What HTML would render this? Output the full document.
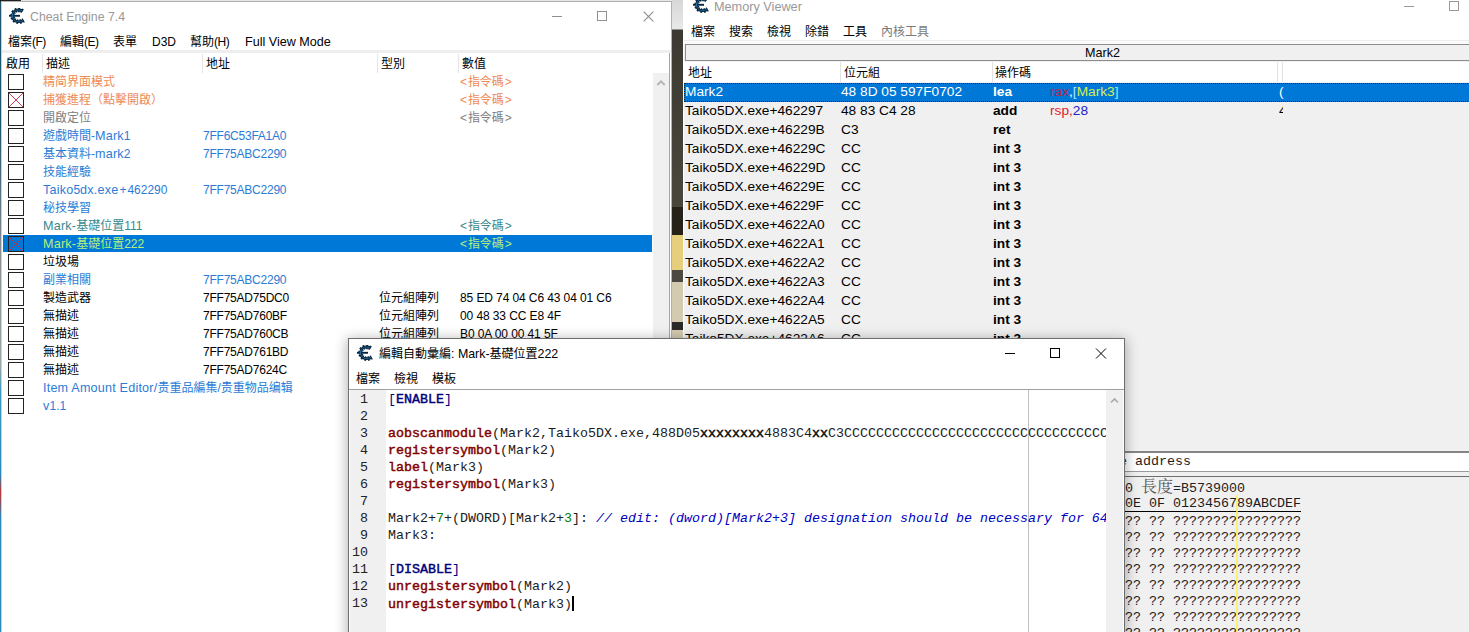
<!DOCTYPE html><html lang="zh-Hant"><head><meta charset="utf-8"><title>Cheat Engine 7.4</title><style>
*{box-sizing:border-box;margin:0;padding:0}
html,body{width:1469px;height:632px;overflow:hidden;background:#f0f0f0}
body{position:relative;font-family:"Liberation Sans","Noto Sans CJK TC",sans-serif;font-size:12px;color:#000;line-height:1}
.a{position:absolute;white-space:pre}
.t{position:absolute;white-space:pre;line-height:16px;height:16px}
#desk{left:0;top:0;width:1469px;height:632px;background:#fff}
/* main CE window */
#ce{left:1px;top:1px;width:671px;height:640px;background:#fff;border:1px solid #b0b0b0;border-left-color:#d0d0d0;overflow:hidden}
#mv{left:683px;top:-12px;width:800px;height:660px;background:#f0f0f0;border-left:1px solid #fff;overflow:hidden}
#ed{left:348px;top:338px;width:777px;height:310px;background:#fff;border:1px solid #6e6e6e;overflow:hidden;box-shadow:0 2px 12px 1px rgba(0,0,0,.3)}
.o{color:#ee8a54} .b{color:#2b7cd6} .g{color:#808080} .k{color:#000}
.cb{position:absolute;left:6px;width:16px;height:16px;border:1px solid #222;background:#fff}
.row{position:absolute;left:0;width:670px;height:18px}
.row .t{top:2px}
.pa{letter-spacing:-0.5px}
.l{font-size:12.6px;letter-spacing:.2px}
.vl{letter-spacing:-0.1px}
.ad{letter-spacing:-0.23px}
.mono{font-family:"Liberation Mono","Noto Sans CJK TC",monospace;font-size:13.33px;color:#1c1c1c}
</style></head><body>
<div class="a" id="desk"></div>
<div class="a" style="left:0;top:0;width:2px;height:632px;background:linear-gradient(#1c5670 0,#1c5670 20%,#8a8f94 40%,#9aa 58%,#3a9ac0 62%,#2a8ab8 75%,#b33 78%,#2a8ab8 82%,#2a8ab8 100%)"></div>
<div class="a" style="left:0;top:0;width:21px;height:2px;background:#222"></div>
<div class="a" style="left:21px;top:0;width:1448px;height:2px;background:#e6e6e6"></div>
<div class="a" style="left:672px;top:0;width:11px;height:632px;background:linear-gradient(#d8d8d8 0,#e8e8e8 29px,#3c3a32 30px,#4a463c 207px,#262219 207px,#262219 235px,#e6cf7c 235px,#e6cf7c 270px,#4a4840 270px,#4a4840 282px,#d3cab0 282px,#d3cab0 322px,#2a2a28 322px,#2a2a28 330px,#d3cab0 330px,#d3cab0 340px,#777 340px)"></div>
<div class="a" id="ce">
<svg class="a" style="left:7px;top:6px" width="16" height="16" viewBox="0 0 16 16"><g fill="none" stroke="#08243a"><path d="M13.6 3.2C12.4 2.4 11 2 9.4 2C5.8 2 3.6 4.4 3.6 7.8C3.6 11.2 5.8 13.6 9.4 13.6C11.4 13.6 13.2 13.1 14.6 12.2" stroke-width="4.6" stroke-dasharray="1.5 1.5"/><path d="M13.6 3.2C12.4 2.4 11 2 9.4 2C5.8 2 3.6 4.4 3.6 7.8C3.6 11.2 5.8 13.6 9.4 13.6C11.4 13.6 13.2 13.1 14.6 12.2" stroke-width="2.8"/><path d="M13.6 3.2C12.4 2.4 11 2 9.4 2C5.8 2 3.6 4.4 3.6 7.8C3.6 11.2 5.8 13.6 9.4 13.6C11.4 13.6 13.2 13.1 14.6 12.2" stroke="#1d6ca5" stroke-width="0.8"/><path d="M0 7.8H11" stroke-width="1.9"/><path d="M3.4 5.8V9.8" stroke="#1d6ca5" stroke-width="1.5"/></g></svg>
<div class="t" style="left:28px;top:7px;color:#999;font-size:12.3px">Cheat Engine 7.4</div>
<svg class="a" style="left:539px;top:0" width="130" height="30" viewBox="0 0 130 30"><g stroke="#8f8f8f" stroke-width="1" fill="none"><path d="M11 14.5H21"/><rect x="56.5" y="9.5" width="9" height="9"/><path d="M102.7 9.7L112.3 19.3M112.3 9.7L102.7 19.3" stroke-width="1.15"/></g></svg>
<div class="t" style="left:6px;top:32px">檔案<span class="pa">(F)</span></div>
<div class="t" style="left:58px;top:32px">編輯<span class="pa">(E)</span></div>
<div class="t" style="left:111px;top:32px">表單</div>
<div class="t" style="left:150px;top:32px">D3D</div>
<div class="t" style="left:188px;top:32px">幫助<span class="pa">(H)</span></div>
<div class="t" style="left:243px;top:32px"><span style="font-size:12.6px">Full View Mode</span></div>
<div class="a" style="left:0;top:48px;width:670px;height:3px;background:#eee"></div>
<div class="a" style="left:40px;top:52px;width:1px;height:19px;background:#e5e5e5"></div>
<div class="a" style="left:200px;top:52px;width:1px;height:19px;background:#e5e5e5"></div>
<div class="a" style="left:375px;top:52px;width:1px;height:19px;background:#e5e5e5"></div>
<div class="a" style="left:456px;top:52px;width:1px;height:19px;background:#e5e5e5"></div>
<div class="t" style="left:4px;top:54px">啟用</div>
<div class="t" style="left:44px;top:54px">描述</div>
<div class="t" style="left:204px;top:54px">地址</div>
<div class="t" style="left:379px;top:54px">型別</div>
<div class="t" style="left:460px;top:54px">數值</div>
<div class="row o" style="top:70px;">
<div class="cb" style="top:2px;"></div>
<div class="t" style="left:41px">精简界面模式</div>
<div class="t vl" style="left:458px">&lt;<span style="margin:0 1px">指令碼</span>&gt;</div>
</div>
<div class="row o" style="top:88px;">
<div class="cb" style="top:2px;"><svg class="a" style="left:0;top:0" width="14" height="14" viewBox="0 0 14 14"><path d="M0 0L14 14M14 0L0 14" stroke="#cc2a3a" stroke-width="0.9" fill="none"/></svg></div>
<div class="t" style="left:41px">捕獲進程（點擊開啟）</div>
<div class="t vl" style="left:458px">&lt;<span style="margin:0 1px">指令碼</span>&gt;</div>
</div>
<div class="row g" style="top:106px;">
<div class="cb" style="top:2px;"></div>
<div class="t" style="left:41px">開啟定位</div>
<div class="t vl" style="left:458px">&lt;<span style="margin:0 1px">指令碼</span>&gt;</div>
</div>
<div class="row b" style="top:124px;">
<div class="cb" style="top:2px;"></div>
<div class="t" style="left:41px">遊戲時間-<span class="l">Mark</span>1</div>
<div class="t ad" style="left:201px">7FF6C53FA1A0</div>
</div>
<div class="row b" style="top:142px;">
<div class="cb" style="top:2px;"></div>
<div class="t" style="left:41px">基本資料-<span class="l">mark</span>2</div>
<div class="t ad" style="left:201px">7FF75ABC2290</div>
</div>
<div class="row b" style="top:160px;">
<div class="cb" style="top:2px;"></div>
<div class="t" style="left:41px">技能經驗</div>
</div>
<div class="row b" style="top:178px;">
<div class="cb" style="top:2px;"></div>
<div class="t" style="left:41px"><span class="l">Taiko</span>5<span class="l">dx.exe</span><span style="margin:0 1px">+</span>462290</div>
<div class="t ad" style="left:201px">7FF75ABC2290</div>
</div>
<div class="row b" style="top:196px;">
<div class="cb" style="top:2px;"></div>
<div class="t" style="left:41px">秘技學習</div>
</div>
<div class="row" style="top:214px;color:#38898c">
<div class="cb" style="top:2px;"></div>
<div class="t" style="left:41px"><span class="l">Mark-</span>基礎位置111</div>
<div class="t vl" style="left:458px">&lt;<span style="margin:0 1px">指令碼</span>&gt;</div>
</div>
<div class="a" style="left:1px;top:233px;width:649px;height:17px;background:#0078d7"></div>
<div class="row" style="top:232px;color:#b6f27a">
<div class="cb" style="top:2px;background:#0078d7;"><svg class="a" style="left:0;top:0" width="14" height="14" viewBox="0 0 14 14"><path d="M0 0L14 14M14 0L0 14" stroke="#cc2a3a" stroke-width="0.9" fill="none"/></svg></div>
<div class="t" style="left:41px"><span class="l">Mark-</span>基礎位置222</div>
<div class="t vl" style="left:458px">&lt;<span style="margin:0 1px">指令碼</span>&gt;</div>
</div>
<div class="row k" style="top:250px;">
<div class="cb" style="top:2px;"></div>
<div class="t" style="left:41px">垃圾場</div>
</div>
<div class="row b" style="top:268px;">
<div class="cb" style="top:2px;"></div>
<div class="t" style="left:41px">副業相關</div>
<div class="t ad" style="left:201px">7FF75ABC2290</div>
</div>
<div class="row k" style="top:286px;">
<div class="cb" style="top:2px;"></div>
<div class="t" style="left:41px">製造武器</div>
<div class="t ad" style="left:201px">7FF75AD75DC0</div>
<div class="t" style="left:377px">位元組陣列</div>
<div class="t vl" style="left:458px">85 ED 74 04 C6 43 04 01 C6</div>
</div>
<div class="row k" style="top:304px;">
<div class="cb" style="top:2px;"></div>
<div class="t" style="left:41px">無描述</div>
<div class="t ad" style="left:201px">7FF75AD760BF</div>
<div class="t" style="left:377px">位元組陣列</div>
<div class="t vl" style="left:458px">00 48 33 CC E8 4F</div>
</div>
<div class="row k" style="top:322px;">
<div class="cb" style="top:2px;"></div>
<div class="t" style="left:41px">無描述</div>
<div class="t ad" style="left:201px">7FF75AD760CB</div>
<div class="t" style="left:377px">位元組陣列</div>
<div class="t vl" style="left:458px">B0 0A 00 00 41 5F</div>
</div>
<div class="row k" style="top:340px;">
<div class="cb" style="top:2px;"></div>
<div class="t" style="left:41px">無描述</div>
<div class="t ad" style="left:201px">7FF75AD761BD</div>
</div>
<div class="row k" style="top:358px;">
<div class="cb" style="top:2px;"></div>
<div class="t" style="left:41px">無描述</div>
<div class="t ad" style="left:201px">7FF75AD7624C</div>
</div>
<div class="row b" style="top:376px;">
<div class="cb" style="top:2px;"></div>
<div class="t" style="left:41px"><span class="l">Item Amount Editor/</span>贵重品編集/贵重物品编辑</div>
</div>
<div class="row b" style="top:394px;">
<div class="cb" style="top:2px;"></div>
<div class="t" style="left:41px"><span class="l">v</span>1.1</div>
</div>
<div class="a" style="left:651px;top:71px;width:16px;height:570px;background:#f0f0f0"></div>
<div class="a" style="left:667px;top:51px;width:1px;height:590px;background:#a6a6a6"></div>
<svg class="a" style="left:651px;top:71px" width="16" height="17" viewBox="0 0 16 17"><path d="M4.3 12L8 8.3L11.7 12" stroke="#b4b4b4" stroke-width="2" fill="none"/></svg>
</div>
<div class="a" id="mv">
<div class="a" style="left:0;top:0;width:800px;height:56px;background:#fbfbfb"></div>
<div class="a" style="left:0;top:0;width:800px;height:52px;background:#fff"></div>
<svg class="a" style="left:9px;top:9px" width="16" height="16" viewBox="0 0 16 16"><g fill="none" stroke="#08243a"><path d="M13.6 3.2C12.4 2.4 11 2 9.4 2C5.8 2 3.6 4.4 3.6 7.8C3.6 11.2 5.8 13.6 9.4 13.6C11.4 13.6 13.2 13.1 14.6 12.2" stroke-width="4.6" stroke-dasharray="1.5 1.5"/><path d="M13.6 3.2C12.4 2.4 11 2 9.4 2C5.8 2 3.6 4.4 3.6 7.8C3.6 11.2 5.8 13.6 9.4 13.6C11.4 13.6 13.2 13.1 14.6 12.2" stroke-width="2.8"/><path d="M13.6 3.2C12.4 2.4 11 2 9.4 2C5.8 2 3.6 4.4 3.6 7.8C3.6 11.2 5.8 13.6 9.4 13.6C11.4 13.6 13.2 13.1 14.6 12.2" stroke="#1d6ca5" stroke-width="0.8"/><path d="M0 7.8H11" stroke-width="1.9"/><path d="M3.4 5.8V9.8" stroke="#1d6ca5" stroke-width="1.5"/></g></svg>
<div class="t" style="left:30px;top:11px;color:#999;font-size:12.7px">Memory Viewer</div>
<svg class="a" style="left:699px;top:8px" width="90" height="20" viewBox="0 0 90 20"><g stroke="#999" stroke-width="1" fill="none"><path d="M21 10.5H31"/><rect x="66.5" y="5.5" width="9" height="9"/></g></svg>
<div class="t" style="left:7px;top:36px;color:#000">檔案</div>
<div class="t" style="left:45px;top:36px;color:#000">搜索</div>
<div class="t" style="left:83px;top:36px;color:#000">檢視</div>
<div class="t" style="left:121px;top:36px;color:#000">除錯</div>
<div class="t" style="left:159px;top:36px;color:#000">工具</div>
<div class="t" style="left:197px;top:36px;color:#7a7a7a">內核工具</div>
<div class="a" style="left:0;top:52px;width:800px;height:1px;background:#ececec"></div>
<div class="a" style="left:1px;top:56px;width:800px;height:17px;background:#f0f0f0;border-top:1px solid #8c8c8c;border-left:1px solid #8c8c8c;border-bottom:1px solid #8c8c8c"></div>
<div class="t" style="left:401px;top:57px;font-size:12.6px">Mark2</div>
<div class="a" style="left:0;top:74px;width:800px;height:20px;background:#fff"></div>
<div class="a" style="left:156px;top:74px;width:1px;height:20px;background:#e2e2e2"></div>
<div class="a" style="left:308px;top:74px;width:1px;height:20px;background:#e2e2e2"></div>
<div class="a" style="left:593px;top:74px;width:1px;height:20px;background:#e2e2e2"></div>
<div class="a" style="left:598px;top:74px;width:1px;height:20px;background:#e2e2e2"></div>
<div class="t" style="left:4px;top:77px">地址</div>
<div class="t" style="left:160px;top:77px">位元組</div>
<div class="t" style="left:311px;top:77px">操作碼</div>
<div class="a" style="left:0;top:95px;width:800px;height:19px;background:#0078d7;outline:1px dotted #222;outline-offset:-1px"></div>
<div class="t" style="left:1px;top:96px;color:#fff;font-size:13.7px;">Mark2</div>
<div class="t" style="left:157px;top:96px;color:#fff;font-size:13.7px;">48 8D 05 597F0702</div>
<div class="t" style="left:309px;top:96px;color:#fff;font-size:13.7px;font-weight:bold">lea</div>
<div class="t" style="left:366px;top:96px;font-size:13.7px;"><span style="color:#b0284c">rax</span><span style="color:#fff">,</span><span style="color:#9fe8ff">[</span><span style="color:#d6f050">Mark3</span><span style="color:#9fe8ff">]</span></div>
<div class="t" style="left:595px;top:96px;color:#fff;font-size:13.7px;">(</div>
<div class="t" style="left:1px;top:115px;color:#000;font-size:13.7px;">Taiko5DX.exe+462297</div>
<div class="t" style="left:157px;top:115px;color:#000;font-size:13.7px;">48 83 C4 28</div>
<div class="t" style="left:309px;top:115px;color:#000;font-size:13.7px;font-weight:bold">add</div>
<div class="t" style="left:366px;top:115px;font-size:13.7px;"><span style="color:#e0202c">rsp,</span><span style="color:#2222cc">28</span></div>
<div class="t" style="left:595px;top:115px;width:4px;overflow:hidden;font-size:13.7px;">4</div>
<div class="t" style="left:1px;top:134px;color:#000;font-size:13.7px;">Taiko5DX.exe+46229B</div>
<div class="t" style="left:157px;top:134px;color:#000;font-size:13.7px;">C3</div>
<div class="t" style="left:309px;top:134px;color:#000;font-size:13.7px;font-weight:bold">ret</div>
<div class="t" style="left:1px;top:153px;color:#000;font-size:13.7px;">Taiko5DX.exe+46229C</div>
<div class="t" style="left:157px;top:153px;color:#000;font-size:13.7px;">CC</div>
<div class="t" style="left:309px;top:153px;color:#000;font-size:13.7px;font-weight:bold">int 3</div>
<div class="t" style="left:1px;top:172px;color:#000;font-size:13.7px;">Taiko5DX.exe+46229D</div>
<div class="t" style="left:157px;top:172px;color:#000;font-size:13.7px;">CC</div>
<div class="t" style="left:309px;top:172px;color:#000;font-size:13.7px;font-weight:bold">int 3</div>
<div class="t" style="left:1px;top:191px;color:#000;font-size:13.7px;">Taiko5DX.exe+46229E</div>
<div class="t" style="left:157px;top:191px;color:#000;font-size:13.7px;">CC</div>
<div class="t" style="left:309px;top:191px;color:#000;font-size:13.7px;font-weight:bold">int 3</div>
<div class="t" style="left:1px;top:210px;color:#000;font-size:13.7px;">Taiko5DX.exe+46229F</div>
<div class="t" style="left:157px;top:210px;color:#000;font-size:13.7px;">CC</div>
<div class="t" style="left:309px;top:210px;color:#000;font-size:13.7px;font-weight:bold">int 3</div>
<div class="t" style="left:1px;top:229px;color:#000;font-size:13.7px;">Taiko5DX.exe+4622A0</div>
<div class="t" style="left:157px;top:229px;color:#000;font-size:13.7px;">CC</div>
<div class="t" style="left:309px;top:229px;color:#000;font-size:13.7px;font-weight:bold">int 3</div>
<div class="t" style="left:1px;top:248px;color:#000;font-size:13.7px;">Taiko5DX.exe+4622A1</div>
<div class="t" style="left:157px;top:248px;color:#000;font-size:13.7px;">CC</div>
<div class="t" style="left:309px;top:248px;color:#000;font-size:13.7px;font-weight:bold">int 3</div>
<div class="t" style="left:1px;top:267px;color:#000;font-size:13.7px;">Taiko5DX.exe+4622A2</div>
<div class="t" style="left:157px;top:267px;color:#000;font-size:13.7px;">CC</div>
<div class="t" style="left:309px;top:267px;color:#000;font-size:13.7px;font-weight:bold">int 3</div>
<div class="t" style="left:1px;top:286px;color:#000;font-size:13.7px;">Taiko5DX.exe+4622A3</div>
<div class="t" style="left:157px;top:286px;color:#000;font-size:13.7px;">CC</div>
<div class="t" style="left:309px;top:286px;color:#000;font-size:13.7px;font-weight:bold">int 3</div>
<div class="t" style="left:1px;top:305px;color:#000;font-size:13.7px;">Taiko5DX.exe+4622A4</div>
<div class="t" style="left:157px;top:305px;color:#000;font-size:13.7px;">CC</div>
<div class="t" style="left:309px;top:305px;color:#000;font-size:13.7px;font-weight:bold">int 3</div>
<div class="t" style="left:1px;top:324px;color:#000;font-size:13.7px;">Taiko5DX.exe+4622A5</div>
<div class="t" style="left:157px;top:324px;color:#000;font-size:13.7px;">CC</div>
<div class="t" style="left:309px;top:324px;color:#000;font-size:13.7px;font-weight:bold">int 3</div>
<div class="t" style="left:1px;top:343px;color:#000;font-size:13.7px;">Taiko5DX.exe+4622A6</div>
<div class="t" style="left:157px;top:343px;color:#000;font-size:13.7px;">CC</div>
<div class="t" style="left:309px;top:343px;color:#000;font-size:13.7px;font-weight:bold">int 3</div>
<div class="a" style="left:440px;top:463px;width:400px;height:2px;background:#858585"></div>
<div class="a" style="left:440px;top:465px;width:400px;height:18px;background:#fff"></div>
<div class="a" style="left:440px;top:483px;width:400px;height:1px;background:#9a9a9a"></div>
<div class="a" style="left:440px;top:488px;width:400px;height:1px;background:#6e6e6e"></div>
<div class="t mono" style="left:435px;top:466px">e address</div>
<div class="t mono" style="left:441px;top:491px;color:#222">0 <span style="font-family:'Liberation Serif','Noto Serif CJK SC',serif;color:#555;font-size:16px">長度</span>=B5739000</div>
<div class="t mono" style="left:441px;top:508px">0E 0F 0123456789ABCDEF</div>
<div class="a" style="left:441px;top:523px;width:176px;height:1px;background:#000"></div>
<div class="t mono" style="left:441px;top:526px">?? ?? ????????????????</div>
<div class="t mono" style="left:441px;top:542px">?? ?? ????????????????</div>
<div class="t mono" style="left:441px;top:558px">?? ?? ????????????????</div>
<div class="t mono" style="left:441px;top:574px">?? ?? ????????????????</div>
<div class="t mono" style="left:441px;top:590px">?? ?? ????????????????</div>
<div class="t mono" style="left:441px;top:606px">?? ?? ????????????????</div>
<div class="t mono" style="left:441px;top:622px">?? ?? ????????????????</div>
<div class="t mono" style="left:441px;top:638px">?? ?? ????????????????</div>
<div class="a" style="left:552px;top:507px;width:2px;height:140px;background:rgba(250,240,90,.8)"></div>
</div>
<div class="a" id="ed">
<svg class="a" style="left:8px;top:6px" width="16" height="16" viewBox="0 0 16 16"><g fill="none" stroke="#08243a"><path d="M13.6 3.2C12.4 2.4 11 2 9.4 2C5.8 2 3.6 4.4 3.6 7.8C3.6 11.2 5.8 13.6 9.4 13.6C11.4 13.6 13.2 13.1 14.6 12.2" stroke-width="4.6" stroke-dasharray="1.5 1.5"/><path d="M13.6 3.2C12.4 2.4 11 2 9.4 2C5.8 2 3.6 4.4 3.6 7.8C3.6 11.2 5.8 13.6 9.4 13.6C11.4 13.6 13.2 13.1 14.6 12.2" stroke-width="2.8"/><path d="M13.6 3.2C12.4 2.4 11 2 9.4 2C5.8 2 3.6 4.4 3.6 7.8C3.6 11.2 5.8 13.6 9.4 13.6C11.4 13.6 13.2 13.1 14.6 12.2" stroke="#1d6ca5" stroke-width="0.8"/><path d="M0 7.8H11" stroke-width="1.9"/><path d="M3.4 5.8V9.8" stroke="#1d6ca5" stroke-width="1.5"/></g></svg>
<div class="t" style="left:30px;top:7px;font-size:12px">編輯自動彙編<span style="font-size:12.4px">: Mark-</span>基礎位置<span style="font-size:12.4px">222</span></div>
<svg class="a" style="left:640px;top:0" width="135" height="30" viewBox="0 0 135 30"><g stroke="#000" stroke-width="1" fill="none"><path d="M16 14.5H26"/><rect x="61.5" y="9.5" width="9" height="9"/><path d="M107 9.5L117 19.5M117 9.5L107 19.5"/></g></svg>
<div class="t" style="left:7px;top:32px">檔案</div>
<div class="t" style="left:45px;top:32px">檢視</div>
<div class="t" style="left:83px;top:32px">模板</div>
<div class="a" style="left:0;top:50px;width:775px;height:1px;background:#a0a0a0"></div>
<div class="a" style="left:1px;top:51px;width:36px;height:260px;background:#f0f0f0"></div>
<div class="a" style="left:679px;top:51px;width:1px;height:260px;background:#c0c0c0"></div>
<div class="a" style="left:757px;top:51px;width:17px;height:260px;background:#f0f0f0"></div>
<svg class="a" style="left:757px;top:52px" width="17" height="17" viewBox="0 0 17 17"><path d="M5 11.5L8.5 8L12 11.5" stroke="#aaa" stroke-width="1.6" fill="none"/></svg>
<div class="t mono" style="left:11px;top:53px;color:#222">1</div>
<div class="t mono" style="left:39px;top:53px;width:718px;overflow:hidden"><span style="color:#000080">[</span><span style="color:#000080;-webkit-text-stroke:0.45px #000080">ENABLE</span><span style="color:#000080">]</span></div>
<div class="t mono" style="left:11px;top:70px;color:#222">2</div>
<div class="t mono" style="left:39px;top:70px;width:718px;overflow:hidden"></div>
<div class="t mono" style="left:11px;top:87px;color:#222">3</div>
<div class="t mono" style="left:39px;top:87px;width:718px;overflow:hidden"><span style="color:#800000;-webkit-text-stroke:0.45px #800000">aobscanmodule</span>(Mark2,Taiko5DX.exe,488D05<span style="-webkit-text-stroke:0.45px #000">xxxxxxxx</span>4883C4<span style="-webkit-text-stroke:0.45px #000">xx</span>C3CCCCCCCCCCCCCCCCCCCCCCCCCCCCCCCCCCCCCCCCCCCC</div>
<div class="t mono" style="left:11px;top:104px;color:#222">4</div>
<div class="t mono" style="left:39px;top:104px;width:718px;overflow:hidden"><span style="color:#800000;-webkit-text-stroke:0.45px #800000">registersymbol</span>(Mark2)</div>
<div class="t mono" style="left:11px;top:121px;color:#222">5</div>
<div class="t mono" style="left:39px;top:121px;width:718px;overflow:hidden"><span style="color:#800000;-webkit-text-stroke:0.45px #800000">label</span>(Mark3)</div>
<div class="t mono" style="left:11px;top:138px;color:#222">6</div>
<div class="t mono" style="left:39px;top:138px;width:718px;overflow:hidden"><span style="color:#800000;-webkit-text-stroke:0.45px #800000">registersymbol</span>(Mark3)</div>
<div class="t mono" style="left:11px;top:155px;color:#222">7</div>
<div class="t mono" style="left:39px;top:155px;width:718px;overflow:hidden"></div>
<div class="t mono" style="left:11px;top:172px;color:#222">8</div>
<div class="t mono" style="left:39px;top:172px;width:718px;overflow:hidden">Mark2+<span style="color:#008000">7</span>+(DWORD)[Mark2+<span style="color:#008000">3</span>]: <span style="color:#0000c0;font-style:italic">// edit: (dword)[Mark2+3] designation should be necessary for 64</span></div>
<div class="t mono" style="left:11px;top:189px;color:#222">9</div>
<div class="t mono" style="left:39px;top:189px;width:718px;overflow:hidden">Mark3:</div>
<div class="t mono" style="left:3px;top:206px;color:#222">10</div>
<div class="t mono" style="left:39px;top:206px;width:718px;overflow:hidden"></div>
<div class="t mono" style="left:3px;top:223px;color:#222">11</div>
<div class="t mono" style="left:39px;top:223px;width:718px;overflow:hidden"><span style="color:#000080">[</span><span style="color:#000080;-webkit-text-stroke:0.45px #000080">DISABLE</span><span style="color:#000080">]</span></div>
<div class="t mono" style="left:3px;top:240px;color:#222">12</div>
<div class="t mono" style="left:39px;top:240px;width:718px;overflow:hidden"><span style="color:#800000;-webkit-text-stroke:0.45px #800000">unregistersymbol</span>(Mark2)</div>
<div class="t mono" style="left:3px;top:257px;color:#222">13</div>
<div class="t mono" style="left:39px;top:257px;width:718px;overflow:hidden"><span style="color:#800000;-webkit-text-stroke:0.45px #800000">unregistersymbol</span>(Mark3)<span style="display:inline-block;width:2px;height:15px;background:#000;vertical-align:-3px"></span></div>
</div>
</body></html>
